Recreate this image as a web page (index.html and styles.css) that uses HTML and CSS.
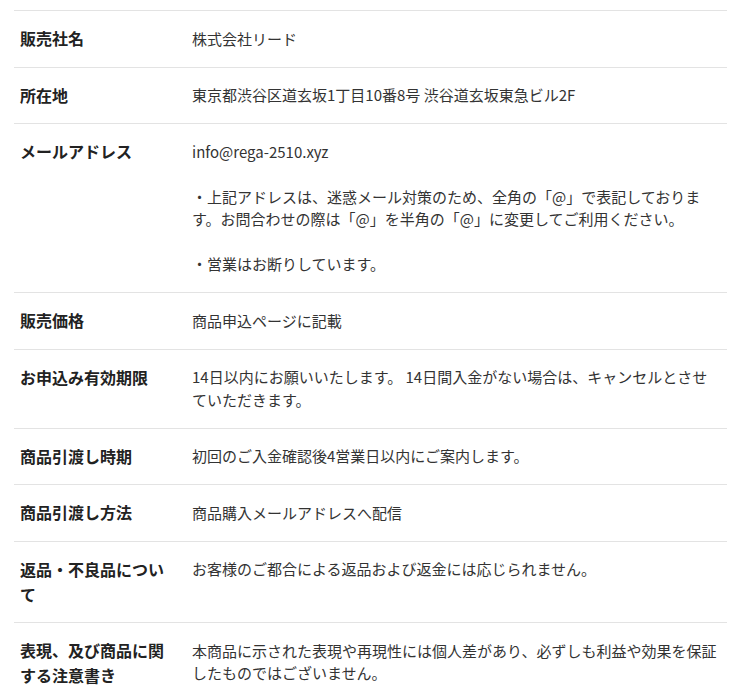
FILE: index.html
```html
<!DOCTYPE html>
<html lang="ja">
<head>
<meta charset="utf-8">
<title>特定商取引法に基づく表記</title>
<link rel="stylesheet" href="styles.css">
</head>
<body>
<div class="page">
  <dl class="law-table">
    <div class="row">
      <dt class="label">販売社名</dt>
      <dd class="value">株式会社リード</dd>
    </div>
    <div class="row">
      <dt class="label">所在地</dt>
      <dd class="value">東京都渋谷区道玄坂1丁目10番8号 渋谷道玄坂東急ビル2F</dd>
    </div>
    <div class="row">
      <dt class="label">メールアドレス</dt>
      <dd class="value">info@rega-2510.xyz<br><br>・上記アドレスは、迷惑メール対策のため、全角の「@」で表記しております。お問合わせの際は「@」を半角の「@」に変更してご利用ください。<br><br>・営業はお断りしています。</dd>
    </div>
    <div class="row">
      <dt class="label">販売価格</dt>
      <dd class="value">商品申込ページに記載</dd>
    </div>
    <div class="row">
      <dt class="label">お申込み有効期限</dt>
      <dd class="value">14日以内にお願いいたします。 14日間入金がない場合は、キャンセルとさせていただきます。</dd>
    </div>
    <div class="row">
      <dt class="label">商品引渡し時期</dt>
      <dd class="value">初回のご入金確認後4営業日以内にご案内します。</dd>
    </div>
    <div class="row">
      <dt class="label">商品引渡し方法</dt>
      <dd class="value">商品購入メールアドレスへ配信</dd>
    </div>
    <div class="row">
      <dt class="label">返品・不良品について</dt>
      <dd class="value">お客様のご都合による返品および返金には応じられません。</dd>
    </div>
    <div class="row">
      <dt class="label">表現、及び商品に関する注意書き</dt>
      <dd class="value">本商品に示された表現や再現性には個人差があり、必ずしも利益や効果を保証したものではございません。</dd>
    </div>
  </dl>
</div>
</body>
</html>
```

FILE: styles.css
```css
html, body {
  margin: 0;
  padding: 0;
  background: #ffffff;
}

body {
  font-family: "Noto Sans CJK JP", "Noto Sans", sans-serif;
  color: #333333;
}

.page {
  padding: 10px 17px 0 14px;
}

.law-table {
  margin: 0;
  border-top: 1px solid #e3e3e3;
}

.row {
  display: grid;
  grid-template-columns: 150px 1fr;
  column-gap: 22px;
  padding: 0 6px;
  border-bottom: 1px solid #e3e3e3;
}

.label {
  margin: 0;
  padding: 15.25px 0;
  font-size: 16px;
  font-weight: 700;
  line-height: 25px;
  color: #222222;
}

.value {
  margin: 0;
  padding: 16.5px 0;
  font-size: 15px;
  line-height: 22.5px;
  color: #333333;
}
```
